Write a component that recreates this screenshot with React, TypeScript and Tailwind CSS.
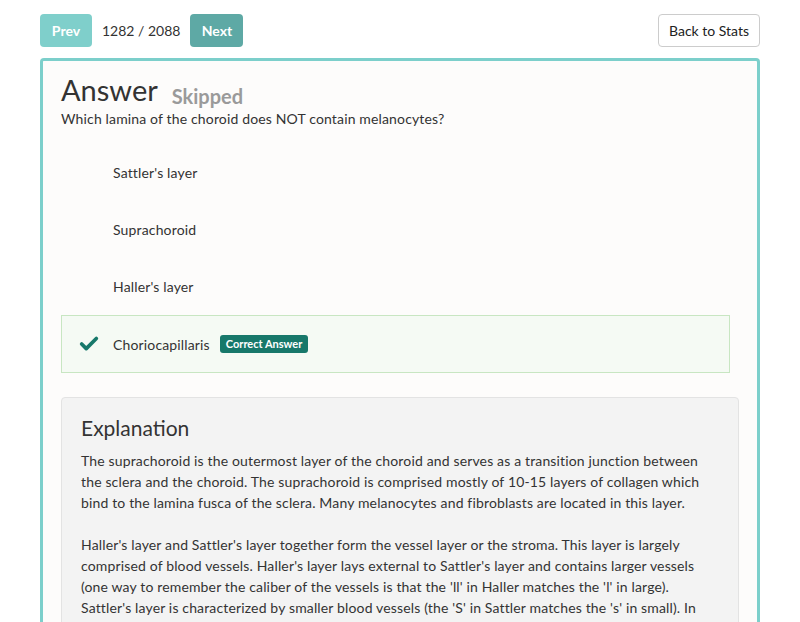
import { Check } from "lucide-react";

const options = ["Sattler's layer", "Suprachoroid", "Haller's layer"];

export default function App() {
  return (
    <div className="h-[622px] overflow-hidden bg-white px-10 pt-[14px] text-[#333] font-['Lato',_'Open_Sans',_sans-serif]">
      <div className="flex items-center justify-between">
        <div className="flex items-center gap-[10px]">
          <button className="h-[33px] w-[52px] rounded-[4px] bg-[#7fcfcb] text-[14px] font-bold text-white">
            Prev
          </button>
          <span className="text-[14px] text-[#333]">1282 / 2088</span>
          <button className="h-[33px] w-[53px] rounded-[4px] bg-[#5ea9a5] text-[14px] font-bold text-white">
            Next
          </button>
        </div>
        <button className="h-[33px] w-[102px] rounded-[4px] border border-[#cccccc] bg-white text-[14px] text-[#222]">
          Back to Stats
        </button>
      </div>

      <div className="mt-[11px] h-[600px] rounded-t-[4px] border-[3px] border-b-0 border-[#7ccfcb] bg-[#fdfcfb] px-[18px] pt-[11px]">
        <div className="flex items-end gap-[14px]">
          <h1 className="text-[29px] leading-[35px] text-[#333]">Answer</h1>
          <span className="mb-[-4px] text-[20px] font-bold text-[#9a9a9a]">Skipped</span>
        </div>
        <p className="mt-[2px] text-[14px] leading-[20px] tracking-[0.15px]">
          Which lamina of the choroid does NOT contain melanocytes?
        </p>

        <div className="mt-[15px] w-[669px] tracking-[0.15px]">
          {options.map((o) => (
            <div key={o} className="flex h-[57px] items-center pl-[52px] text-[14px]">
              {o}
            </div>
          ))}
          <div className="flex h-[58px] items-center border border-[#c8e6c2] bg-[#f5faf4] pl-[16px] text-[14px]">
            <Check className="h-[22px] w-[22px] text-[#17786a]" strokeWidth={4} />
            <span className="ml-[13px]">Choriocapillaris</span>
            <span className="ml-[10px] rounded-[3px] bg-[#17786a] px-[6px] py-[2px] text-[11px] font-bold leading-[14px] tracking-normal text-white">
              Correct Answer
            </span>
          </div>
        </div>

        <div className="mt-[24px] rounded-[4px] border border-[#e3e3e3] bg-[#f3f3f3] px-[19px] pt-[16px] pb-5">
          <h2 className="text-[21px] leading-[28px] text-[#333]">Explanation</h2>
          <p className="mt-[8px] whitespace-nowrap text-[14px] leading-[21px] tracking-[0.15px]">
            The suprachoroid is the outermost layer of the choroid and serves as a transition junction between
            <br />
            the sclera and the choroid. The suprachoroid is comprised mostly of 10-15 layers of collagen which
            <br />
            bind to the lamina fusca of the sclera. Many melanocytes and fibroblasts are located in this layer.
          </p>
          <p className="mt-[21px] whitespace-nowrap text-[14px] leading-[21px] tracking-[0.15px]">
            Haller's layer and Sattler's layer together form the vessel layer or the stroma. This layer is largely
            <br />
            comprised of blood vessels. Haller's layer lays external to Sattler's layer and contains larger vessels
            <br />
            (one way to remember the caliber of the vessels is that the 'll' in Haller matches the 'l' in large).
            <br />
            Sattler's layer is characterized by smaller blood vessels (the 'S' in Sattler matches the 's' in small). In
          </p>
        </div>
      </div>
    </div>
  );
}
